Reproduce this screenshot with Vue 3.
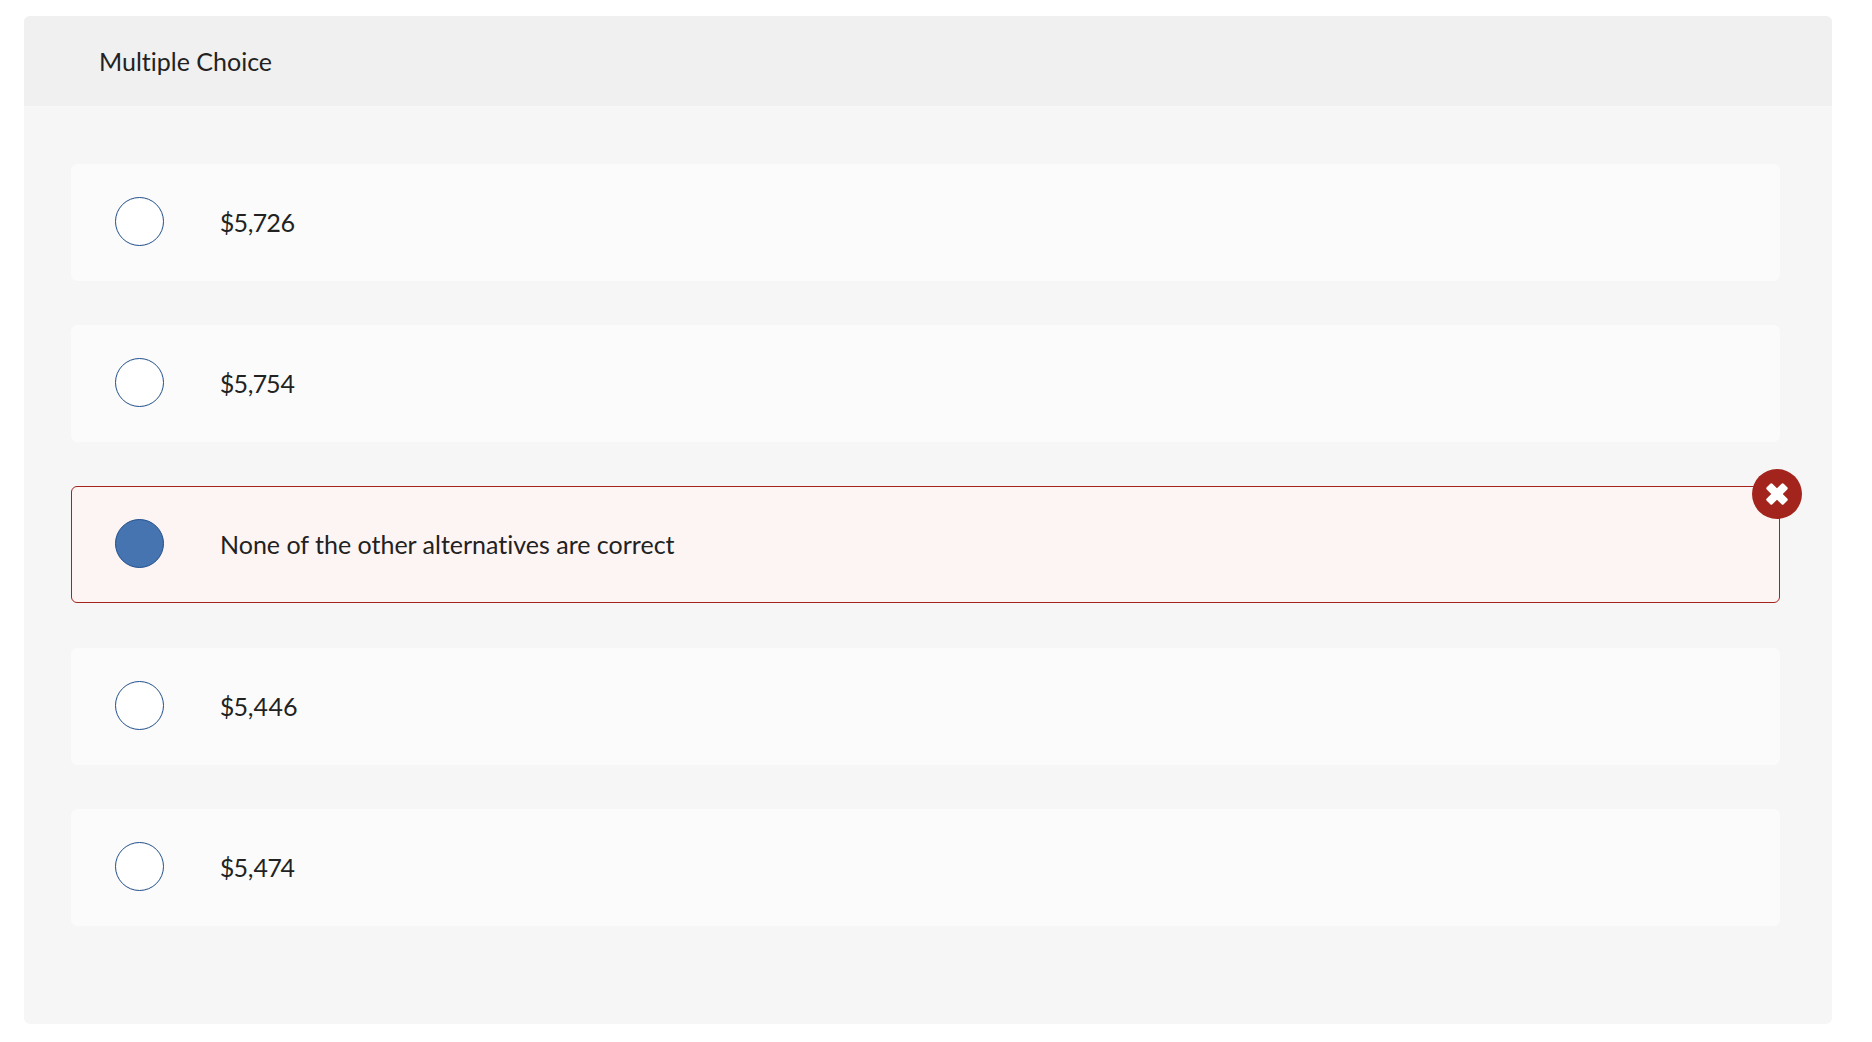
<script setup>
const options = [
  { id: 1, text: '$5,726' },
  { id: 2, text: '$5,754' },
  { id: 3, text: 'None of the other alternatives are correct', wrong: true },
  { id: 4, text: '$5,446' },
  { id: 5, text: '$5,474' }
]
</script>

<template>
  <div class="page">
    <section class="card">
      <header class="head">Multiple Choice</header>
      <div class="list">
        <div v-for="o in options" :key="o.id" class="option" :class="{ wrong: o.wrong }">
          <span class="radio" :class="{ on: o.wrong }"></span>
          <span class="label">{{ o.text }}</span>
          <span v-if="o.wrong" class="badge">
            <svg width="26" height="26" viewBox="0 0 26 26">
              <rect x="1" y="9" width="24" height="8" rx="1.5" fill="#fff" transform="rotate(45 13 13)" />
              <rect x="1" y="9" width="24" height="8" rx="1.5" fill="#fff" transform="rotate(-45 13 13)" />
            </svg>
          </span>
        </div>
      </div>
    </section>
  </div>
</template>

<style>
html, body { margin: 0; background: #fff; }
</style>

<style scoped>
.page {
  box-sizing: border-box;
  height: 1042px;
  padding: 16px 40px 18px 24px;
  font-family: Lato, "Liberation Sans", sans-serif;
  font-variant-ligatures: none;
  font-feature-settings: "pnum" 1, "liga" 0;
  color: #222;
  overflow: hidden;
}
.card {
  height: 1008px;
  background: #f6f6f6;
  border-radius: 6px;
  overflow: hidden;
}
.head {
  box-sizing: border-box;
  height: 90px;
  padding: 0 0 0 75px;
  background: #f0f0f0;
  display: flex;
  align-items: center;
  font-size: 25px;
}
.list {
  display: flex;
  flex-direction: column;
  gap: 44.2px;
  padding: 58px 52px 0 47px;
}
.option {
  position: relative;
  box-sizing: border-box;
  height: 117px;
  display: flex;
  align-items: center;
  padding-left: 43px;
  background: #fbfbfb;
  border: 1px solid #fbfbfb;
  border-radius: 6px;
}
.option.wrong {
  background: #fdf5f4;
  border-color: #a3241c;
}
.radio {
  box-sizing: border-box;
  width: 49px;
  height: 49px;
  flex: none;
  border-radius: 50%;
  background: #fff;
  border: 1px solid #1f4f8c;
  position: relative;
  top: -1px;
}
.radio.on { background: #4674b0; }
.label {
  margin-left: 56px;
  font-size: 25px;
  line-height: 1;
  position: relative;
}
.badge {
  position: absolute;
  top: -18px;
  right: -23px;
  width: 50px;
  height: 50px;
  border-radius: 50%;
  background: #a3241c;
  display: flex;
  align-items: center;
  justify-content: center;
}
</style>
